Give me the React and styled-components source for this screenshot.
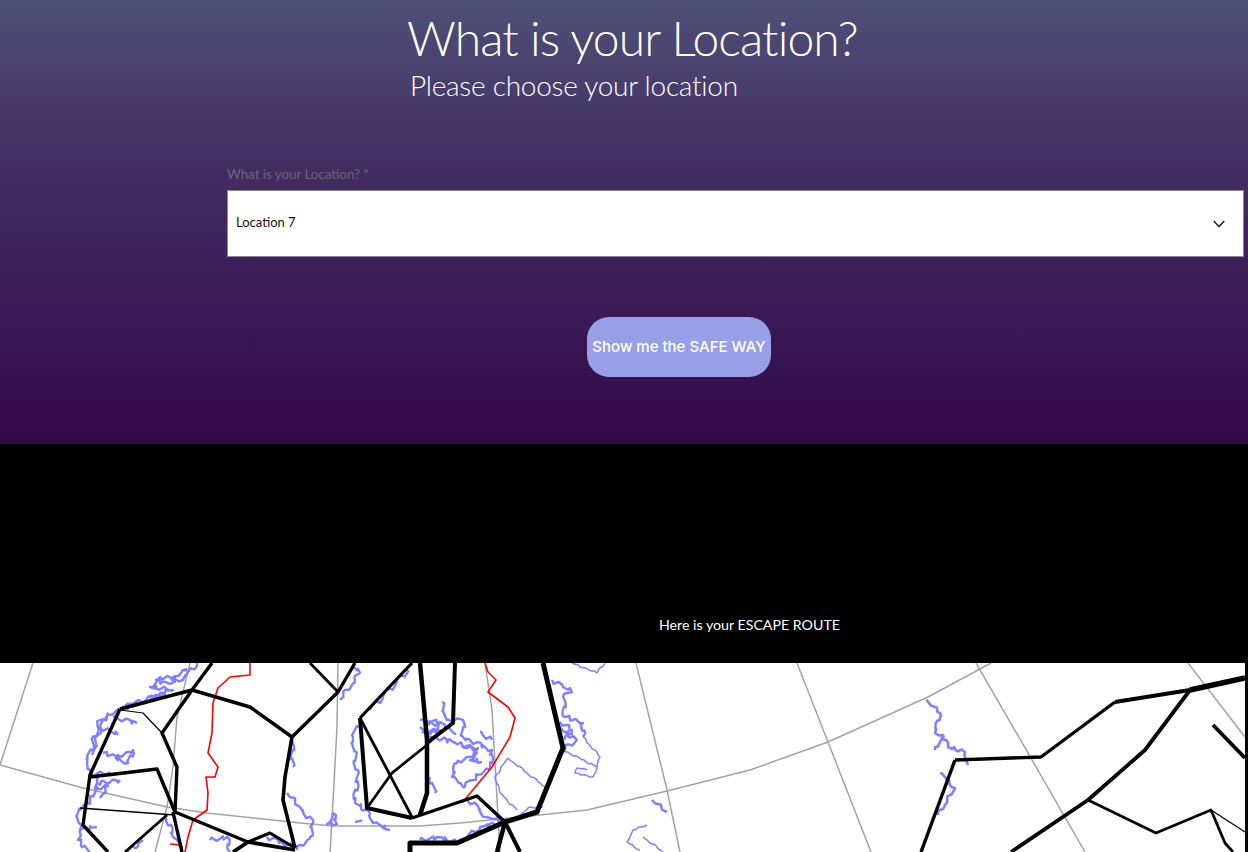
import styled, { createGlobalStyle } from "styled-components";

const GlobalStyle = createGlobalStyle`
  html, body {
    margin: 0;
    padding: 0;
    height: 852px;
    overflow: hidden;
    background: #000;
    font-family: "Lato", "Liberation Sans", sans-serif;
  }
`;

const Page = styled.div`
  width: 1248px;
  height: 852px;
  overflow: hidden;
  display: flex;
  flex-direction: column;
`;

const Hero = styled.section`
  height: 444px;
  flex: none;
  box-sizing: border-box;
  padding-top: 8px;
  display: flex;
  flex-direction: column;
  align-items: flex-start;
  background: linear-gradient(180deg, #4f4f77 0%, #412c61 40%, #33084a 100%);
`;

const Title = styled.h1`
  margin: 0 0 0 407px;
  font-size: 48px;
  line-height: 60px;
  font-weight: 300;
  letter-spacing: -0.9px;
  color: #fff;
`;

const Subtitle = styled.h2`
  margin: 0 0 0 410px;
  font-size: 28px;
  line-height: 34px;
  font-weight: 300;
  letter-spacing: -0.25px;
  color: #fff;
`;

const Field = styled.div`
  margin: 63px 0 0 227px;
  width: 1017px;
`;

const Label = styled.div`
  font-size: 13.3px;
  line-height: 18px;
  color: #6a6475;
  margin-bottom: 7px;
`;

const Select = styled.div`
  height: 67px;
  box-sizing: border-box;
  padding: 0 18px 0 8px;
  display: flex;
  align-items: center;
  justify-content: space-between;
  background: #fff;
  border: 1px solid #8a8794;
  font-size: 13px;
  color: #111;
`;

const SelectValue = styled.span`
  margin-bottom: 4px;
`;

const Chevron = styled.svg`
  width: 12px;
  height: 8px;
  flex: none;
`;

const SafeButton = styled.button`
  margin: 60px 0 0 587px;
  width: 184px;
  height: 60px;
  padding: 0 0 2px;
  border: none;
  border-radius: 22px;
  background: #979fe6;
  color: #fff;
  font-family: "Inter", "Liberation Sans", sans-serif;
  font-size: 15px;
  font-weight: 500;
  white-space: nowrap;
`;

const Band = styled.section`
  height: 219px;
  flex: none;
  box-sizing: border-box;
  padding: 171px 0 0 659px;
  background: #000;
`;

const BandText = styled.div`
  font-size: 14.2px;
  line-height: 20px;
  font-weight: 400;
  color: #fff;
`;

const MapFrame = styled.div`
  width: 1245px;
  height: 189px;
  flex: none;
  background: #fff;
  overflow: hidden;
`;

const MapSvg = styled.svg`
  display: block;
  width: 1245px;
  height: 189px;
`;

// coast outlines are hand traced, then roughened so they look like the raster map
const rough = (pts, amp, seed) => {
  const out = [];
  for (let i = 0; i < pts.length - 1; i++) {
    const [x1, y1] = pts[i];
    const [x2, y2] = pts[i + 1];
    const steps = Math.max(1, Math.round(Math.hypot(x2 - x1, y2 - y1) / 3));
    for (let s = 0; s < steps; s++) {
      const k = s / steps;
      const n = seed + i * 7 + s * 3;
      out.push([
        x1 + (x2 - x1) * k + (s ? Math.sin(n * 12.9) * amp : 0),
        y1 + (y2 - y1) * k + (s ? Math.cos(n * 78.2) * amp : 0),
      ]);
    }
  }
  out.push(pts[pts.length - 1]);
  return out;
};

const toLine = pts => pts.map(p => `${p[0].toFixed(1)},${p[1].toFixed(1)}`).join(" ");

const grid = [
  [[33, 663], [0, 765]],
  [[0, 765], [83, 788], [167, 807], [207, 813], [300, 823], [333, 826], [420, 826], [460, 823], [540, 815], [587, 810], [667, 791], [750, 770], [828, 742], [928, 697], [991, 663]],
  [[190, 663], [177, 717], [173, 767], [167, 807], [155, 852]],
  [[338, 663], [337, 727], [332, 820], [330, 852]],
  [[485, 663], [492, 710], [500, 852]],
  [[636, 663], [667, 790], [680, 852]],
  [[797, 663], [828, 742], [871, 852]],
  [[976, 663], [1028, 753], [1085, 852]],
  [[1188, 663], [1245, 737]],
];

const coast = [
  [[197, 663], [183, 680], [160, 677], [150, 687], [173, 690], [150, 697], [120, 710], [100, 720], [93, 743], [87, 763], [97, 783], [90, 800], [78, 813], [80, 830], [78, 840], [90, 852]],
  [[186, 668], [170, 684], [155, 680]],
  [[165, 692], [145, 703], [125, 706]],
  [[106, 716], [98, 735], [92, 755]],
  [[103, 753], [117, 757], [133, 750], [128, 763], [115, 757]],
  [[97, 783], [120, 780]],
  [[95, 790], [108, 786], [100, 798]],
  [[93, 775], [110, 772]],
  [[113, 717], [137, 723]],
  [[100, 727], [118, 735]],
  [[97, 827], [80, 830]],
  [[167, 818], [173, 837], [183, 847]],
  [[143, 840], [127, 852]],
  [[210, 840], [227, 837], [230, 852]],
  [[267, 837], [295, 847]],
  [[292, 740], [293, 767]],
  [[287, 793], [300, 807], [313, 823], [310, 837], [297, 850]],
  [[333, 813], [327, 824], [337, 824], [333, 813]],
  [[360, 720], [353, 737], [357, 777], [355, 803], [370, 813], [373, 823], [390, 830]],
  [[355, 822], [362, 820]],
  [[408, 670], [370, 710]],
  [[353, 667], [360, 673], [340, 700]],
  [[442, 702], [447, 720], [463, 720], [463, 737], [492, 750], [490, 767], [473, 780], [463, 787], [452, 777], [457, 763], [477, 753], [460, 743], [433, 737], [420, 727]],
  [[425, 722], [445, 725], [455, 735]],
  [[422, 733], [440, 730], [428, 742]],
  [[462, 745], [478, 748], [470, 760], [482, 762]],
  [[480, 732], [492, 740]],
  [[430, 777], [435, 793]],
  [[420, 720], [440, 722], [430, 735]],
  [[467, 798], [487, 817], [503, 820]],
  [[467, 837], [480, 827], [500, 823]],
  [[420, 840], [437, 837], [457, 842]],
  [[552, 680], [563, 687], [572, 692], [563, 697], [565, 717], [583, 723], [583, 737]],
  [[557, 727], [577, 740], [563, 750]],
  [[560, 722], [572, 730], [565, 740]],
];

const coastThin = [
  [[572, 663], [597, 673], [605, 663]],
  [[583, 737], [600, 757], [597, 767], [593, 777], [575, 773], [577, 768], [587, 770]],
  [[563, 750], [597, 767]],
  [[508, 758], [495, 777], [500, 793], [517, 810]],
  [[508, 758], [545, 787]],
  [[520, 817], [528, 808], [543, 807]],
  [[647, 825], [633, 830], [627, 842], [640, 850]],
  [[643, 837], [663, 852]],
];

const lakes = [
  [[926, 700], [940, 713], [935, 733], [943, 735], [935, 750]],
  [[943, 735], [948, 747], [965, 752], [968, 765]],
  [[940, 773], [955, 788], [938, 815]],
  [[652, 800], [667, 812]],
];

const border = [
  [[250, 663], [250, 675], [230, 677], [218, 688], [213, 703], [212, 733], [208, 753], [218, 767], [215, 777], [206, 777], [208, 793], [207, 810], [193, 820], [188, 837], [185, 852]],
  [[170, 844], [182, 845]],
  [[485, 663], [488, 672], [496, 680], [488, 692], [508, 707], [515, 718], [510, 737], [492, 767], [467, 797], [462, 803]],
];

// routes: [width, points]
const routes = [
  [3.4, [[212, 663], [192, 690], [120, 709]]],
  [3.4, [[120, 709], [90, 775], [83, 825], [108, 852]]],
  [3.4, [[192, 690], [250, 707], [292, 737], [338, 692], [355, 663]]],
  [2.8, [[310, 663], [338, 692]]],
  [3.6, [[292, 737], [285, 777], [283, 800], [295, 848]]],
  [3.4, [[192, 690], [162, 733], [177, 767], [175, 812]]],
  [1.2, [[120, 710], [143, 713], [162, 733]]],
  [3.4, [[90, 777], [157, 769], [175, 812]]],
  [1.6, [[80, 808], [175, 815]]],
  [3.2, [[175, 812], [248, 842], [270, 833], [295, 848]]],
  [3.8, [[233, 852], [248, 842], [295, 850]]],
  [3.4, [[173, 812], [182, 852]]],
  [2.8, [[167, 815], [125, 852]]],
  [3.2, [[412, 663], [360, 718]]],
  [4, [[360, 718], [367, 808], [412, 818]]],
  [2.8, [[360, 718], [412, 817]]],
  [2.8, [[427, 745], [392, 773], [367, 808]]],
  [4.5, [[420, 663], [427, 740], [427, 793], [420, 815]]],
  [4, [[455, 663], [453, 723], [427, 743]]],
  [5, [[543, 663], [563, 748], [537, 812], [505, 822], [457, 843], [410, 843], [410, 852]]],
  [3.4, [[412, 818], [477, 796], [505, 822]]],
  [4.5, [[505, 822], [497, 852]]],
  [4, [[505, 822], [520, 852]]],
  [3.4, [[921, 852], [955, 760]]],
  [3.4, [[955, 760], [1041, 757], [1115, 702]]],
  [3.8, [[1115, 702], [1190, 690]]],
  [5.5, [[1190, 690], [1245, 678]]],
  [3.8, [[1190, 690], [1145, 750], [1088, 800], [1011, 852]]],
  [2.8, [[1088, 800], [1156, 833], [1211, 810], [1225, 843], [1233, 852]]],
  [1.2, [[1211, 810], [1245, 832]]],
  [3.8, [[1213, 725], [1245, 758]]],
];

function EuropeMap() {
  return (
    <MapSvg viewBox="0 663 1245 189" fill="none" strokeLinejoin="round">
      {grid.map((p, i) => (
        <polyline key={i} points={toLine(p)} stroke="#a3a3a3" strokeWidth="1.5" />
      ))}
      {coast.map((p, i) => (
        <polyline key={i} points={toLine(rough(p, 2.2, i + 1))} stroke="#8080ff" strokeWidth="2.4" />
      ))}
      {coastThin.map((p, i) => (
        <polyline key={i} points={toLine(rough(p, 0.8, i + 40))} stroke="#8080ff" strokeWidth="1.5" />
      ))}
      {lakes.map((p, i) => (
        <polyline key={i} points={toLine(rough(p, 1.6, i + 70))} stroke="#8080ff" strokeWidth="2.6" />
      ))}
      {border.map((p, i) => (
        <polyline key={i} points={toLine(p)} stroke="#ff0000" strokeWidth="1.6" />
      ))}
      {routes.map(([w, p], i) => (
        <polyline key={i} points={toLine(p)} stroke="#000" strokeWidth={w} />
      ))}
    </MapSvg>
  );
}

export default function App() {
  return (
    <Page>
      <GlobalStyle />
      <Hero>
        <Title>What is your Location?</Title>
        <Subtitle>Please choose your location</Subtitle>
        <Field>
          <Label>What is your Location? *</Label>
          <Select>
            <SelectValue>Location 7</SelectValue>
            <Chevron viewBox="0 0 12 8" fill="none">
              <path d="M.7 1 6 6.5 11.3 1" stroke="#111" strokeWidth="1.3" />
            </Chevron>
          </Select>
        </Field>
        <SafeButton>Show me the SAFE WAY</SafeButton>
      </Hero>
      <Band>
        <BandText>Here is your ESCAPE ROUTE</BandText>
      </Band>
      <MapFrame>
        <EuropeMap />
      </MapFrame>
    </Page>
  );
}
